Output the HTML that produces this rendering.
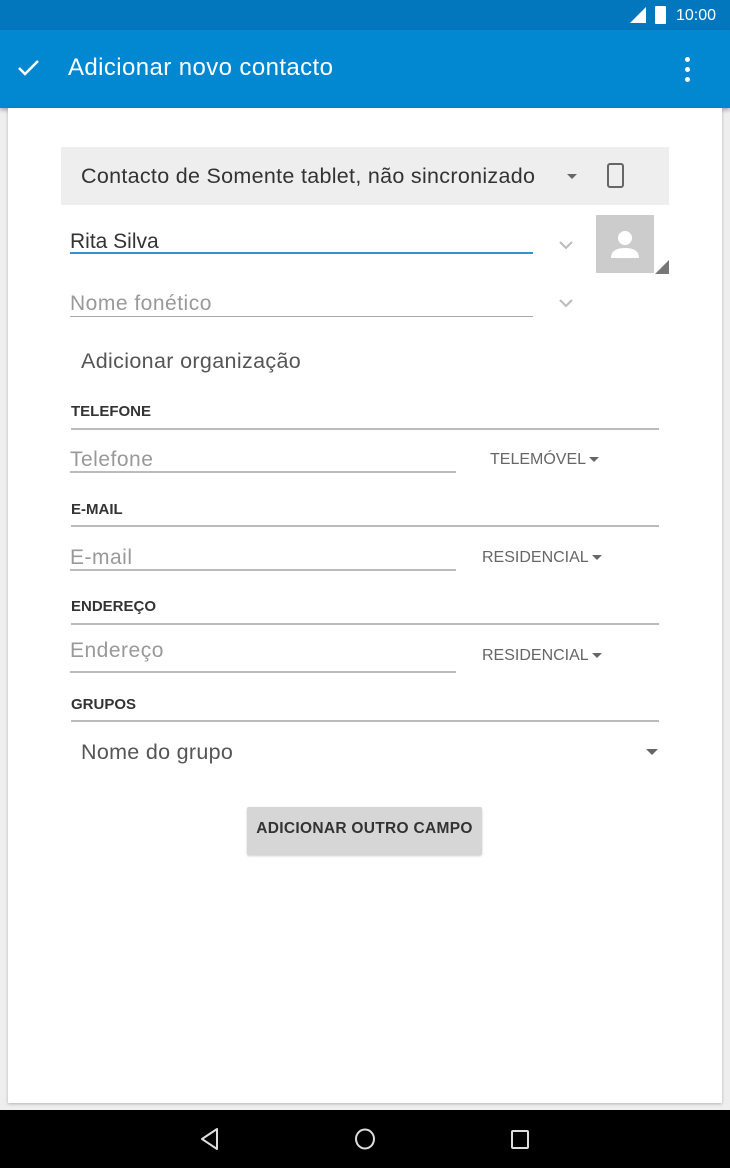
<!DOCTYPE html>
<html><head><meta charset="utf-8"><style>
*{margin:0;padding:0;box-sizing:border-box}
body{width:730px;height:1168px;position:relative;overflow:hidden;background:#eeeeee;font-family:"Liberation Sans",sans-serif}
.a{position:absolute}
.t{white-space:nowrap}
.hd{font-size:15px;font-weight:bold;color:#333}
.ln{height:2px;background:#bbb}
.ph{font-size:21px;color:#999;letter-spacing:0.5px}
.ty{font-size:16px;color:#666}
.tri{display:inline-block;width:0;height:0;border-left:5px solid transparent;border-right:5px solid transparent;border-top:5px solid #666;vertical-align:middle;margin-left:3px}
</style></head><body>
<div class="a" style="left:0;top:0;width:730px;height:30px;background:#0277bd"></div>
<svg class="a" style="left:630px;top:7px" width="16" height="16"><polygon points="16,0 16,16 0,16" fill="#fff"/></svg>
<div class="a" style="left:655px;top:6px;width:11px;height:18px;background:#fff;border-radius:1px"></div>
<div class="a t" style="left:676px;top:7px;font-size:16px;color:#fff">10:00</div>
<div class="a" style="left:0;top:30px;width:730px;height:78px;background:#0288d1;box-shadow:0 2px 4px rgba(0,0,0,.3)"></div>
<svg class="a" style="left:17px;top:58px" width="24" height="20"><path d="M2 10 L8 16 L21 3" stroke="#fff" stroke-width="2.5" fill="none"/></svg>
<div class="a t" style="left:68px;top:54px;font-size:24px;letter-spacing:0.4px;color:#fff">Adicionar novo contacto</div>
<div class="a" style="left:685px;top:57px;width:5px;height:5px;border-radius:50%;background:#fff;box-shadow:0 10px 0 #fff,0 20px 0 #fff"></div>
<div class="a" style="left:8px;top:108px;width:714px;height:995px;background:#fff;box-shadow:0 1px 3px rgba(0,0,0,.25)"></div>
<div class="a" style="left:61px;top:147px;width:608px;height:58px;background:#eeeeee"></div>
<div class="a t" style="left:81px;top:164px;font-size:21.5px;letter-spacing:0.3px;color:#333">Contacto de Somente tablet, não sincronizado</div>
<div class="a" style="left:567px;top:174px;border-left:5px solid transparent;border-right:5px solid transparent;border-top:5px solid #666"></div>
<div class="a" style="left:607px;top:163px;width:17px;height:25px;border:2.5px solid #666;border-radius:3px"></div>
<div class="a t" style="left:70px;top:230px;font-size:21px;color:#333">Rita Silva</div>
<div class="a" style="left:70px;top:252px;width:463px;height:2px;background:#2b95d6"></div>
<svg class="a" style="left:558px;top:240px" width="16" height="10"><path d="M2 2 L8 8 L14 2" stroke="#bbb" stroke-width="2" fill="none"/></svg>
<div class="a" style="left:596px;top:215px;width:58px;height:58px;background:#cccccc"></div>
<svg class="a" style="left:596px;top:215px" width="74" height="60"><circle cx="29" cy="23" r="7" fill="#fff"/><path d="M15 43 Q15 33 29 33 Q43 33 43 43 Z" fill="#fff"/><polygon points="73,45 73,59 59,59" fill="#777"/></svg>
<div class="a t ph" style="left:70px;top:292px">Nome fonético</div>
<div class="a ln" style="left:70px;top:316px;width:463px;height:1px;background:#aaa"></div>
<svg class="a" style="left:558px;top:298px" width="16" height="10"><path d="M2 2 L8 8 L14 2" stroke="#bbb" stroke-width="2" fill="none"/></svg>
<div class="a t" style="left:81px;top:349px;font-size:21.5px;letter-spacing:0.35px;color:#555">Adicionar organização</div>

<div class="a t hd" style="left:71px;top:403px">TELEFONE</div>
<div class="a ln" style="left:71px;top:428px;width:588px"></div>
<div class="a t ph" style="left:70px;top:448px">Telefone</div>
<div class="a ln" style="left:70px;top:471px;width:386px"></div>
<div class="a t ty" style="left:490px;top:451px">TELEMÓVEL<span class="tri"></span></div>

<div class="a t hd" style="left:71px;top:501px">E-MAIL</div>
<div class="a ln" style="left:71px;top:525px;width:588px"></div>
<div class="a t ph" style="left:70px;top:546px">E-mail</div>
<div class="a ln" style="left:70px;top:569px;width:386px"></div>
<div class="a t ty" style="left:482px;top:549px">RESIDENCIAL<span class="tri"></span></div>

<div class="a t hd" style="left:71px;top:598px">ENDEREÇO</div>
<div class="a ln" style="left:71px;top:623px;width:588px"></div>
<div class="a t ph" style="left:70px;top:639px">Endereço</div>
<div class="a ln" style="left:70px;top:671px;width:386px"></div>
<div class="a t ty" style="left:482px;top:647px">RESIDENCIAL<span class="tri"></span></div>

<div class="a t hd" style="left:71px;top:696px">GRUPOS</div>
<div class="a ln" style="left:71px;top:720px;width:588px"></div>
<div class="a t" style="left:81px;top:740px;font-size:21.5px;letter-spacing:0.3px;color:#555">Nome do grupo</div>
<div class="a" style="left:646px;top:749px;border-left:6px solid transparent;border-right:6px solid transparent;border-top:6px solid #666"></div>

<div class="a" style="left:247px;top:807px;width:235px;height:48px;background:#d6d6d6;border-radius:2px;box-shadow:0 1px 2px rgba(0,0,0,.2)"></div>
<div class="a t" style="left:247px;top:820px;width:235px;text-align:center;font-size:15.5px;letter-spacing:0.3px;font-weight:bold;color:#333">ADICIONAR OUTRO CAMPO</div>

<div class="a" style="left:0;top:1110px;width:730px;height:58px;background:#000"></div>
<svg class="a" style="left:195px;top:1124px" width="340" height="30"><path d="M22 5 L7 15 L22 25 Z" stroke="#ddd" stroke-width="2" fill="none" stroke-linejoin="round"/><ellipse cx="170" cy="15" rx="9" ry="9.5" stroke="#ddd" stroke-width="2" fill="none"/><rect x="317" y="7" width="16" height="17" rx="1" stroke="#ddd" stroke-width="2" fill="none"/></svg>
</body></html>
